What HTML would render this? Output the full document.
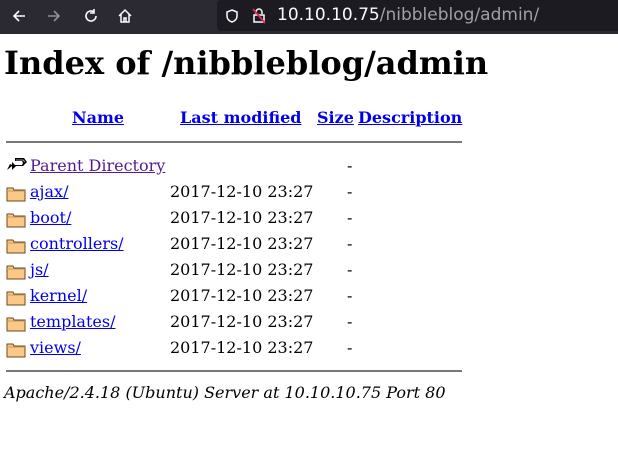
<!DOCTYPE html>
<html><head><meta charset="utf-8"><style>
body{margin:0;width:618px;height:456px;background:#fff;position:relative;overflow:hidden;font-family:"DejaVu Serif","Liberation Serif",serif;font-size:16px;}
.bar{position:absolute;left:0;top:0;width:618px;height:34px;background:#2b2a33;}
.url{position:absolute;left:217px;top:0;width:410px;height:31px;background:#1c1b22;border-radius:4px;}
.a{position:absolute;white-space:nowrap}
a{color:#0000ee;}
a.v{color:#551a8b}
h1{position:absolute;left:4px;top:44px;margin:0;font-size:32px;font-weight:bold;}
.hdr{font-weight:bold;}
hr{position:absolute;margin:0;border:0;height:2px;background:#777;left:6px;width:456px;}
.f{position:absolute;left:6px;width:20px;height:17px;}
</style></head><body>
<div class="bar">
<svg class="a" style="left:11px;top:8px" width="16" height="16" viewBox="0 0 16 16"><path d="M14 8H3M8 3L3 8l5 5" stroke="#fbfbfe" stroke-width="1.6" fill="none"/></svg>
<svg class="a" style="left:46px;top:8px" width="16" height="16" viewBox="0 0 16 16"><path d="M2 8h11M8 3l5 5-5 5" stroke="#8f8f9d" stroke-width="1.6" fill="none"/></svg>
<svg class="a" style="left:83px;top:8px" width="16" height="16" viewBox="0 0 16 16"><path d="M13 8a5 5 0 1 1-2-4M11 1v4h-4" stroke="#fbfbfe" stroke-width="1.6" fill="none"/></svg>
<svg class="a" style="left:117px;top:8px" width="16" height="16" viewBox="0 0 16 16"><path d="M2 8L8 2l6 6M4 6v8h8V6M7 14v-4h2v4" stroke="#fbfbfe" stroke-width="1.5" fill="none"/></svg>
<div class="url">
<svg class="a" style="left:7px;top:8px" width="16" height="16" viewBox="0 0 16 16"><path d="M8 2l5 2v4c0 3-2 5-5 6-3-1-5-3-5-6V4z" stroke="#fbfbfe" stroke-width="1.5" fill="none"/></svg>
<svg class="a" style="left:34px;top:7px" width="16" height="17" viewBox="0 0 16 17"><path d="M5 7V5a3 3 0 0 1 6 0v2M3 8h10v7H3z" stroke="#fbfbfe" stroke-width="1.5" fill="none"/><path d="M2 2l12 14" stroke="#e22850" stroke-width="1.8"/></svg>
<div class="a" style="left:60px;top:5px;font-family:'DejaVu Sans','Liberation Sans',sans-serif;font-size:17px;color:#fbfbfe">10.10.10.75<span style="color:#a0a0a8">/nibbleblog/admin/</span></div>
</div>
</div>
<h1>Index of /nibbleblog/admin</h1>
<div class="a hdr" style="left:72px;top:108px"><a href="#">Name</a></div>
<div class="a hdr" style="left:180px;top:108px"><a href="#">Last modified</a></div>
<div class="a hdr" style="left:317px;top:108px"><a href="#">Size</a></div>
<div class="a hdr" style="left:358px;top:108px"><a href="#">Description</a></div>
<hr style="top:141px">
<svg class="a" style="left:6px;top:156px" width="22" height="20" viewBox="0 0 22 20"><path d="M9 2h9l3 4-4 4H10L6 14v-4L1 14l3-6 2 1V6l3 3h7l1-2-1-2h-7z" fill="#000"/><path d="M10 4h7l2 2" stroke="#999" fill="none"/></svg>
<div class="a" style="left:30px;top:156px"><a class="v" href="#">Parent Directory</a></div>
<div class="a" style="left:347px;top:156px">-</div>

<div id="rows"></div>
<hr style="top:370px">
<div class="a" style="left:4px;top:383px;font-style:italic">Apache/2.4.18 (Ubuntu) Server at 10.10.10.75 Port 80</div>
<script>
var n=["ajax/","boot/","controllers/","js/","kernel/","templates/","views/"],h="";
n.forEach(function(x,i){var y=182+26*i;
h+='<svg class="f" style="top:'+(y+3)+'px" viewBox="0 0 20 17"><path d="M1 3h6l1 2h11v11H1z" fill="#fcc887" stroke="#6b4a1e"/><path d="M1 6h18" stroke="#c99a5b"/></svg>'+
'<div class="a" style="left:30px;top:'+y+'px"><a href="#">'+x+'</a></div>'+
'<div class="a" style="left:170px;top:'+y+'px">2017-12-10 23:27</div>'+
'<div class="a" style="left:347px;top:'+y+'px">-</div>';});
document.getElementById("rows").innerHTML=h;
</script>
</body></html>
